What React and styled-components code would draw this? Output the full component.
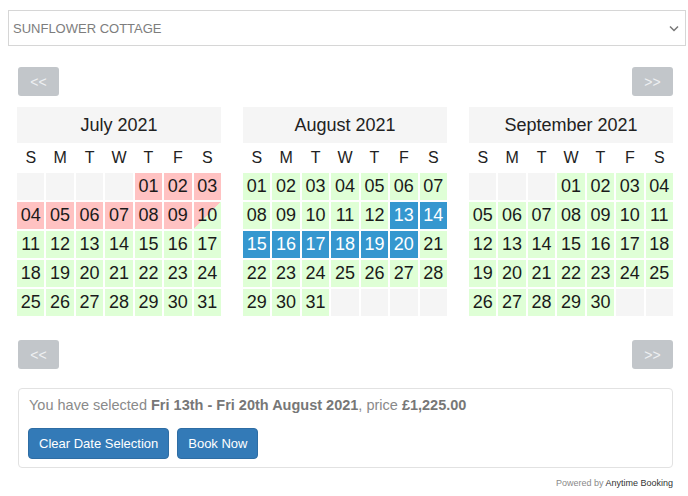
import React from "react";
import styled, { createGlobalStyle } from "styled-components";

const GlobalStyle = createGlobalStyle`
  html, body { margin: 0; padding: 0; background: #fff; }
  body {
    font-family: "Liberation Sans", Arial, Helvetica, sans-serif;
    color: #222;
  }
`;

const Page = styled.div`
  display: flex;
  flex-direction: column;
  padding-top: 10px;
`;

const SelectBox = styled.div`
  margin: 0 2px 0 8px;
  height: 36px;
  box-sizing: border-box;
  border: 1px solid #d6d6d6;
  display: flex;
  align-items: center;
  justify-content: space-between;
  padding: 0 6px 0 4px;
  font-size: 13px;
  color: #7d7d7d;
`;

const Content = styled.div`
  margin: 0 15px 0 18px;
  display: flex;
  flex-direction: column;
`;

const NavRow = styled.div`
  display: flex;
  justify-content: space-between;
  margin-top: ${(p) => p.$top}px;
`;

const NavButton = styled.button`
  width: 41px;
  height: 29px;
  border: none;
  border-radius: 3px;
  background: #c2c6ca;
  color: #eef0f2;
  font-family: inherit;
  font-size: 14px;
  padding: 0;
  cursor: default;
`;

const Calendars = styled.div`
  display: grid;
  grid-template-columns: repeat(3, 204px);
  justify-content: space-between;
  margin: 11px 0 0 -1px;
`;

const Month = styled.div`
  display: grid;
  grid-template-columns: repeat(7, 1fr);
  grid-template-rows: 36px 26px;
  grid-auto-rows: 27px;
  gap: 2px;
`;

const MonthTitle = styled.div`
  grid-column: 1 / -1;
  background: #f5f5f5;
  display: flex;
  align-items: center;
  justify-content: center;
  font-size: 18px;
  color: #222;
`;

const WeekDay = styled.div`
  display: flex;
  align-items: center;
  justify-content: center;
  font-size: 16px;
  color: #222;
`;

const bg = {
  empty: "#f5f5f5",
  free: "#dfffd6",
  booked: "#ffc2c2",
  selected: "#3597cf",
  change: "linear-gradient(to bottom right, #ffc2c2 50%, #dfffd6 50%)",
};

const Day = styled.div`
  display: flex;
  align-items: center;
  justify-content: center;
  font-size: 18px;
  background: ${(p) => bg[p.$state]};
  color: ${(p) => (p.$state === "selected" ? "#fff" : "#1a1a1a")};
`;

const Booking = styled.div`
  margin-top: 19px;
  border: 1px solid #e2e2e2;
  border-radius: 4px;
  padding: 6px 9px 8px 9px;
  display: flex;
  flex-direction: column;
  gap: 13px;
`;

const Summary = styled.div`
  font-size: 14.5px;
  line-height: 20px;
  color: #8a8a8a;
  padding-left: 1px;
  b { color: #777; }
`;

const Actions = styled.div`
  display: flex;
  gap: 8px;
`;

const PrimaryButton = styled.button`
  height: 31px;
  padding: 0 10px;
  border: 1px solid #2e6da4;
  border-radius: 4px;
  background: #337ab7;
  color: #fff;
  font-family: inherit;
  font-size: 13px;
  cursor: pointer;
`;

const Powered = styled.div`
  margin-top: 9px;
  text-align: right;
  font-size: 9px;
  line-height: 12px;
  color: #8a8a8a;
  span { color: #333; }
`;

const Chevron = () => (
  <svg width="10" height="7" viewBox="0 0 10 7">
    <polyline points="1,1.5 5,5.5 9,1.5" fill="none" stroke="#777" strokeWidth="1.5" />
  </svg>
);

const months = [
  {
    name: "July 2021",
    lead: 4,
    days: 31,
    state: (d) => (d < 10 ? "booked" : d === 10 ? "change" : "free"),
  },
  {
    name: "August 2021",
    lead: 0,
    days: 31,
    state: (d) => (d >= 13 && d <= 20 ? "selected" : "free"),
  },
  {
    name: "September 2021",
    lead: 3,
    days: 30,
    state: () => "free",
  },
];

const weekDays = ["S", "M", "T", "W", "T", "F", "S"];

function MonthView({ m }) {
  const cells = [];
  for (let i = 0; i < m.lead; i++) cells.push({ key: "l" + i, state: "empty", label: "" });
  for (let d = 1; d <= m.days; d++)
    cells.push({ key: "d" + d, state: m.state(d), label: String(d).padStart(2, "0") });
  while (cells.length % 7 !== 0) cells.push({ key: "t" + cells.length, state: "empty", label: "" });
  return (
    <Month>
      <MonthTitle>{m.name}</MonthTitle>
      {weekDays.map((w, i) => (
        <WeekDay key={i}>{w}</WeekDay>
      ))}
      {cells.map((c) => (
        <Day key={c.key} $state={c.state}>
          {c.label}
        </Day>
      ))}
    </Month>
  );
}

export default function App() {
  return (
    <>
      <GlobalStyle />
      <Page>
        <SelectBox>
          <span>SUNFLOWER COTTAGE</span>
          <Chevron />
        </SelectBox>
        <Content>
          <NavRow $top={21}>
            <NavButton>&lt;&lt;</NavButton>
            <NavButton>&gt;&gt;</NavButton>
          </NavRow>
          <Calendars>
            {months.map((m) => (
              <MonthView key={m.name} m={m} />
            ))}
          </Calendars>
          <NavRow $top={24}>
            <NavButton>&lt;&lt;</NavButton>
            <NavButton>&gt;&gt;</NavButton>
          </NavRow>
          <Booking>
            <Summary>
              You have selected <b>Fri 13th - Fri 20th August 2021</b>, price <b>£1,225.00</b>
            </Summary>
            <Actions>
              <PrimaryButton>Clear Date Selection</PrimaryButton>
              <PrimaryButton>Book Now</PrimaryButton>
            </Actions>
          </Booking>
          <Powered>
            Powered by <span>Anytime Booking</span>
          </Powered>
        </Content>
      </Page>
    </>
  );
}
